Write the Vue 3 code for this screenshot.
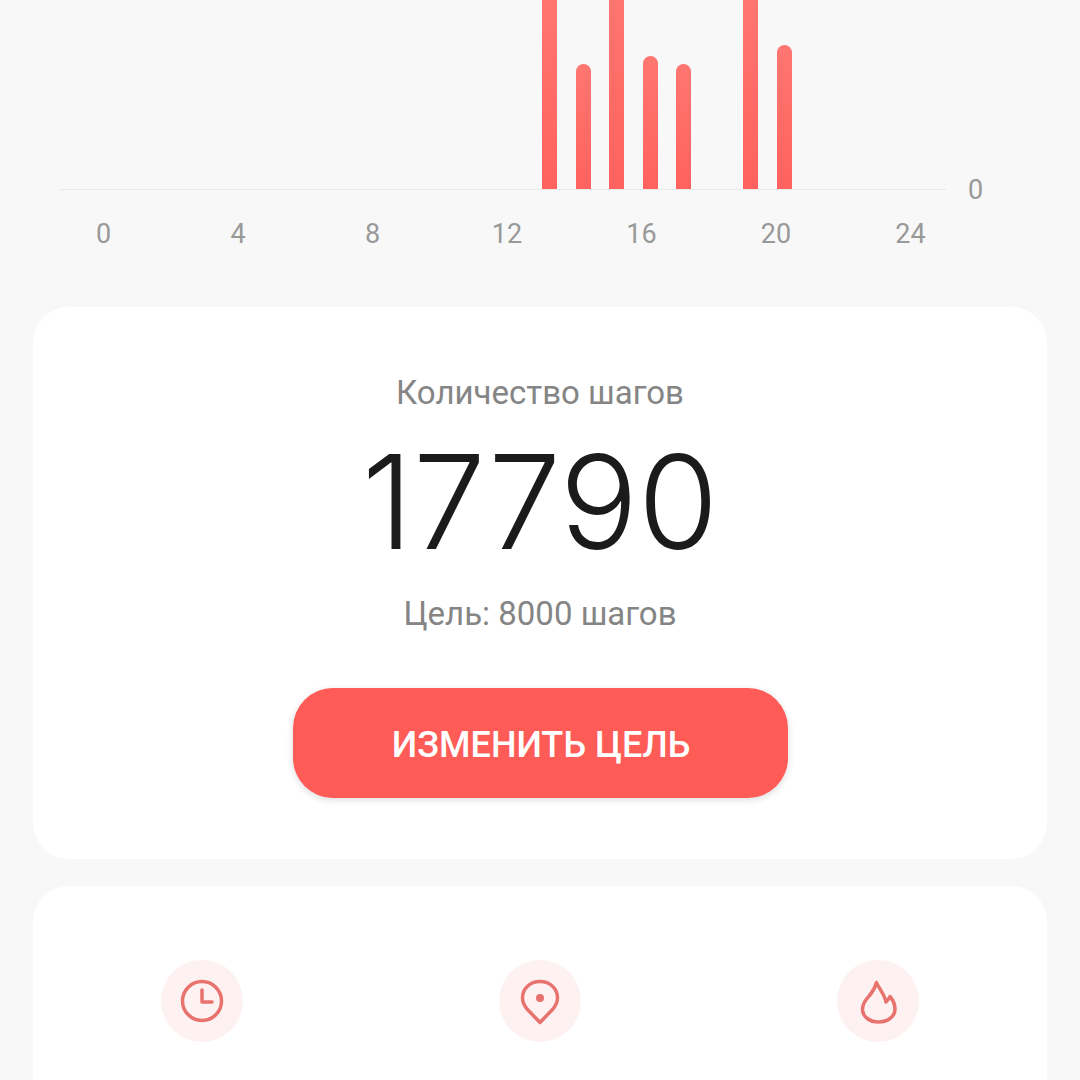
<script setup>
const bars = [
  0, 0, 0, 0, 0, 0, 0, 0, 0, 0, 0, 0, 0,
  200, 125, 200, 133, 125, 0, 200, 144, 0, 0, 0,
]
const hours = [0, 4, 8, 12, 16, 20, 24]
</script>

<template>
  <div class="page">
    <section class="chart">
      <div class="plot-row">
        <div class="plot">
          <div v-for="(h, i) in bars" :key="i" class="slot">
            <div v-if="h" class="bar" :style="{ height: h + 'px' }"></div>
          </div>
        </div>
        <span class="zero">0</span>
      </div>
      <div class="hours">
        <span v-for="h in hours" :key="h" class="hour">{{ h }}</span>
      </div>
    </section>

    <section class="card goal">
      <div class="goal-title">Количество шагов</div>
      <div class="goal-value">17790</div>
      <div class="goal-sub">Цель: 8000 шагов</div>
      <button class="goal-btn">ИЗМЕНИТЬ ЦЕЛЬ</button>
    </section>

    <section class="card stats">
      <div class="stat">
        <svg class="ico" viewBox="0 0 82 82" fill="none">
          <circle cx="41" cy="41" r="19.5" />
          <path d="M41 30V42H51" />
        </svg>
      </div>
      <div class="stat">
        <svg class="ico" viewBox="0 0 82 82" fill="none">
          <path d="M41 62.5L28.5 49.5C25 45.5 23.5 42 23.5 38C23.5 28.5 31 21.5 41 21.5C51 21.5 58.5 28.5 58.5 38C58.5 42 57 45.5 53.5 49.5Z" />
          <circle class="dot" cx="41" cy="38" r="4" />
        </svg>
      </div>
      <div class="stat">
        <svg class="ico" viewBox="0 0 82 82" fill="none">
          <path d="M39.5 22.5C41.5 28 47 33 49 42C50.5 40.5 52 38.5 53 36.5C56 40 58 44 58 49C58 57 50 62 41.5 62C33 62 25.5 57 25.5 49C25.5 43 29 39.5 32.5 35.5C35.5 32 38 28 39.5 22.5Z" />
        </svg>
      </div>
    </section>
  </div>
</template>

<style scoped>
.page {
  width: 1080px;
  height: 1080px;
  overflow: hidden;
  background: #f8f8f8;
  font-family: Roboto, "Noto Sans", sans-serif;
}
.chart {
  height: 307px;
  padding-left: 60px;
  box-sizing: border-box;
}
.plot-row {
  display: flex;
  align-items: flex-end;
  height: 190px;
}
.plot {
  width: 886px;
  height: 190px;
  box-sizing: border-box;
  padding-left: 46px;
  display: flex;
  align-items: flex-end;
  border-bottom: 1px solid #e9e9e9;
}
.slot {
  width: 33.55px;
  flex: none;
}
.bar {
  width: 15px;
  border-radius: 7.5px 7.5px 0 0;
  background: linear-gradient(#ff7671, #ff625e);
}
.zero {
  margin-left: 22px;
  margin-bottom: -15px;
  line-height: 30px;
  font-size: 27px;
  color: #999;
}
.hours {
  display: flex;
  justify-content: space-between;
  width: 847px;
  margin: 29px 0 0 23.5px;
}
.hour {
  width: 40px;
  text-align: center;
  line-height: 30px;
  font-size: 27px;
  color: #999;
}
.card {
  width: 1014px;
  margin-left: 33px;
  background: #fff;
  border-radius: 36px;
}
.goal {
  height: 552px;
  box-sizing: border-box;
  padding-top: 67px;
  display: flex;
  flex-direction: column;
  align-items: center;
}
.goal-title {
  font-size: 33px;
  line-height: 38px;
  color: #858585;
}
.goal-value {
  margin-top: 15px;
  font-family: Inter, Roboto, sans-serif;
  font-size: 130px;
  font-weight: 300;
  line-height: 150px;
  color: #1b1b1b;
}
.goal-sub {
  margin-top: 18px;
  font-size: 33px;
  line-height: 38px;
  color: #858585;
}
.goal-btn {
  margin-top: 55px;
  width: 495px;
  height: 110px;
  border: none;
  border-radius: 40px;
  padding: 4px 0 0 2px;
  background: #ff5c58;
  color: #fff;
  font-family: inherit;
  font-size: 36px;
  font-weight: 500;
  box-shadow: 0 2px 7px rgba(0, 0, 0, 0.14);
}
.stats {
  margin-top: 27px;
  height: 300px;
  box-sizing: border-box;
  padding: 74px 128px 0;
  display: flex;
  justify-content: space-between;
  align-items: flex-start;
}
.stat {
  width: 82px;
  height: 82px;
  border-radius: 50%;
  background: #fdf2f1;
}
.ico {
  display: block;
  width: 82px;
  height: 82px;
  stroke: #e8736e;
  stroke-width: 3.5;
  stroke-linecap: round;
  stroke-linejoin: round;
}
.dot {
  fill: #e8736e;
  stroke: none;
}
</style>
